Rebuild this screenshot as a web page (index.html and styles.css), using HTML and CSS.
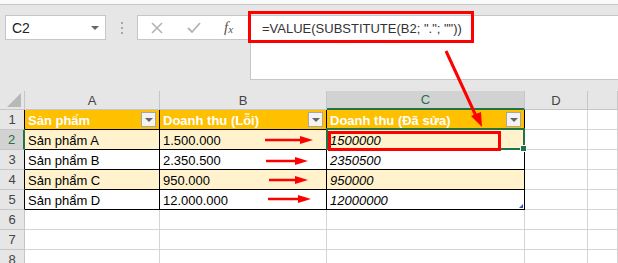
FILE: index.html
```html
<!DOCTYPE html>
<html lang="vi">
<head>
  <meta charset="UTF-8">
  <title>VALUE SUBSTITUTE</title>
  <link rel="stylesheet" href="styles.css">
</head>
<body>
  <div class="window">
    <div class="ribbon-edge"></div>

    <div class="formula-bar">
      <div class="name-box">
        <span>C2</span>
        <span class="caret"></span>
      </div>
      <div class="sep"><i></i><i></i><i></i></div>
      <div class="fx-buttons">
        <svg class="btn-cancel" width="12" height="12" viewBox="0 0 12 12">
          <path d="M1 1 L11 11 M11 1 L1 11" stroke="#b4b4b4" stroke-width="1.6" fill="none"/>
        </svg>
        <svg class="btn-enter" width="14" height="12" viewBox="0 0 14 12">
          <path d="M1 6 L5 10 L13 1" stroke="#b4b4b4" stroke-width="1.8" fill="none"/>
        </svg>
        <span class="fx">f<sub>x</sub></span>
      </div>
      <div class="formula-input">=VALUE(SUBSTITUTE(B2; "."; ""))</div>
    </div>

    <div class="sheet">
      <div class="corner"><span></span></div>
      <div class="colhead">A</div>
      <div class="colhead">B</div>
      <div class="colhead active">C</div>
      <div class="colhead">D</div>
      <div class="colhead"></div>

      <div class="rowhead t">1</div>
      <div class="cell t hdr">Sản phẩm<span class="filter"></span></div>
      <div class="cell t hdr">Doanh thu (Lỗi)<span class="filter"></span></div>
      <div class="cell t hdr">Doanh thu (Đã sửa)<span class="filter"></span></div>
      <div class="cell"></div>
      <div class="cell"></div>

      <div class="rowhead active">2</div>
      <div class="cell t band">Sản phẩm A</div>
      <div class="cell t band">1.500.000</div>
      <div class="cell t band num selected">1500000</div>
      <div class="cell"></div>
      <div class="cell"></div>

      <div class="rowhead t">3</div>
      <div class="cell t">Sản phẩm B</div>
      <div class="cell t">2.350.500</div>
      <div class="cell t num">2350500</div>
      <div class="cell"></div>
      <div class="cell"></div>

      <div class="rowhead t">4</div>
      <div class="cell t band">Sản phẩm C</div>
      <div class="cell t band">950.000</div>
      <div class="cell t band num">950000</div>
      <div class="cell"></div>
      <div class="cell"></div>

      <div class="rowhead t">5</div>
      <div class="cell t">Sản phẩm D</div>
      <div class="cell t">12.000.000</div>
      <div class="cell t num last">12000000</div>
      <div class="cell"></div>
      <div class="cell"></div>

      <div class="rowhead">6</div>
      <div class="cell"></div><div class="cell"></div><div class="cell"></div><div class="cell"></div><div class="cell"></div>

      <div class="rowhead">7</div>
      <div class="cell"></div><div class="cell"></div><div class="cell"></div><div class="cell"></div><div class="cell"></div>

      <div class="rowhead">8</div>
      <div class="cell"></div><div class="cell"></div><div class="cell"></div><div class="cell"></div><div class="cell"></div>
    </div>

    <!-- red annotations drawn on top of the screenshot -->
    <svg class="marks" width="618" height="263" viewBox="0 0 618 263">
      <g fill="none" stroke="#ff0000" stroke-width="3">
        <rect x="249.5" y="12.5" width="223" height="29"/>
        <rect x="329.5" y="132.5" width="170" height="17"/>
        <line x1="446" y1="51" x2="476" y2="116"/>
      </g>
      <polygon points="482,127 471,116 481,112" fill="#ff0000"/>
      <g stroke="#ff0000" stroke-width="2.5">
        <line x1="265" y1="140" x2="302" y2="140"/>
        <line x1="266" y1="161" x2="297" y2="161"/>
        <line x1="269" y1="180" x2="297" y2="180"/>
        <line x1="268" y1="199" x2="300" y2="199"/>
      </g>
      <g fill="#ff0000">
        <polygon points="300,136 313,140 300,144"/>
        <polygon points="295,157 308,161 295,165"/>
        <polygon points="295,176 308,180 295,184"/>
        <polygon points="298,195 311,199 298,203"/>
      </g>
    </svg>
  </div>
</body>
</html>
```

FILE: styles.css
```css
body {
  margin: 0;
  padding: 0;
  background-color: #fff;
  font-family: "Liberation Sans", Arial, sans-serif;
  font-size: 13px;
  color: #000;
}

.window {
  position: relative;
  width: 618px;
  height: 263px;
  overflow: hidden;
}

.ribbon-edge {
  height: 4px;
  background-color: #fafafa;
  border-bottom: 1px solid #c6c6c6;
}

/* formula bar */

.formula-bar {
  height: 86px;
  box-sizing: border-box;
  padding: 10px 0 0 5px;
  background-color: #e6e6e6;
  display: flex;
  align-items: flex-start;
}

.name-box {
  width: 101px;
  height: 25px;
  box-sizing: border-box;
  border: 1px solid #c6c6c6;
  background-color: #fff;
  display: flex;
  align-items: center;
  justify-content: space-between;
  padding: 0 6px 0 6px;
  color: #222;
  font-size: 14px;
}

.caret {
  width: 0;
  height: 0;
  border-left: 4px solid transparent;
  border-right: 4px solid transparent;
  border-top: 4px solid #666;
}

.sep {
  width: 31px;
  height: 25px;
  display: flex;
  flex-direction: column;
  align-items: center;
  justify-content: center;
  gap: 3px;
}

.sep i {
  width: 2px;
  height: 2px;
  background-color: #a8a8a8;
}

.fx-buttons {
  width: 112px;
  height: 25px;
  box-sizing: border-box;
  border: 1px solid #c6c6c6;
  background-color: #fff;
  display: flex;
  align-items: center;
  padding-left: 13px;
}

.btn-enter {
  margin-left: 24px;
}

.fx {
  margin-left: 23px;
  font-family: "Liberation Serif", serif;
  font-style: italic;
  font-size: 15px;
  color: #555;
}

.fx sub {
  font-size: 11px;
  vertical-align: -1px;
}

.formula-input {
  flex: 1;
  height: 65px;
  box-sizing: border-box;
  margin-left: 1px;
  border: 1px solid #c6c6c6;
  border-right: none;
  background-color: #fff;
  padding: 5px 0 0 11px;
  line-height: 16px;
  color: #333;
  font-size: 13px;
  white-space: nowrap;
}

/* worksheet grid */

.sheet {
  display: grid;
  grid-template-columns: 25px 135px 167px 198px 63px 30px;
  grid-template-rows: 19px repeat(8, 20px);
  background-color: #fff;
}

.corner,
.colhead,
.rowhead {
  box-sizing: border-box;
  background-color: #e6e6e6;
  border-right: 1px solid #c6c6c6;
  border-bottom: 1px solid #c6c6c6;
  color: #444;
  font-size: 13px;
  display: flex;
  align-items: center;
  justify-content: center;
}

.corner {
  position: relative;
}

.corner span {
  position: absolute;
  right: 3px;
  bottom: 2px;
  width: 0;
  height: 0;
  border-left: 14px solid transparent;
  border-bottom: 14px solid #b8b8b8;
}

.colhead.active {
  background-color: #d2d2d2;
  color: #217346;
  border-bottom: 2px solid #217346;
}

.rowhead.t {
  border-right-color: #000;
}

.rowhead.active {
  background-color: #d2d2d2;
  color: #217346;
  border-right: 2px solid #217346;
}

.cell {
  position: relative;
  box-sizing: border-box;
  border-right: 1px solid #d4d4d4;
  border-bottom: 1px solid #d4d4d4;
  padding: 1px 0 0 3px;
  line-height: 19px;
  white-space: nowrap;
}

.cell.t {
  border-right-color: #000;
  border-bottom-color: #000;
}

.cell.hdr {
  background-color: #ffc000;
  color: #fff;
  font-weight: bold;
}

.cell.band {
  background-color: #fff2cc;
}

.cell.num {
  font-style: italic;
}

.filter {
  position: absolute;
  right: 3px;
  top: 2px;
  width: 15px;
  height: 15px;
  box-sizing: border-box;
  border: 1px solid #a6a6a6;
  background-color: #f3f3f3;
}

.filter::after {
  content: "";
  position: absolute;
  left: 3px;
  top: 5px;
  border-left: 4px solid transparent;
  border-right: 4px solid transparent;
  border-top: 4px solid #666;
}

.cell.selected::after {
  content: "";
  position: absolute;
  left: -1px;
  top: -2px;
  right: -1px;
  bottom: -1px;
  border: 2px solid #217346;
}

.cell.selected::before {
  content: "";
  position: absolute;
  right: -3px;
  bottom: -3px;
  width: 5px;
  height: 5px;
  background-color: #217346;
  border: 1px solid #fff;
  z-index: 2;
}

.cell.last::after {
  content: "";
  position: absolute;
  right: 1px;
  bottom: 1px;
  width: 0;
  height: 0;
  border-left: 4px solid transparent;
  border-bottom: 4px solid #3b52a8;
}

.marks {
  position: absolute;
  left: 0;
  top: 0;
  pointer-events: none;
}
```
